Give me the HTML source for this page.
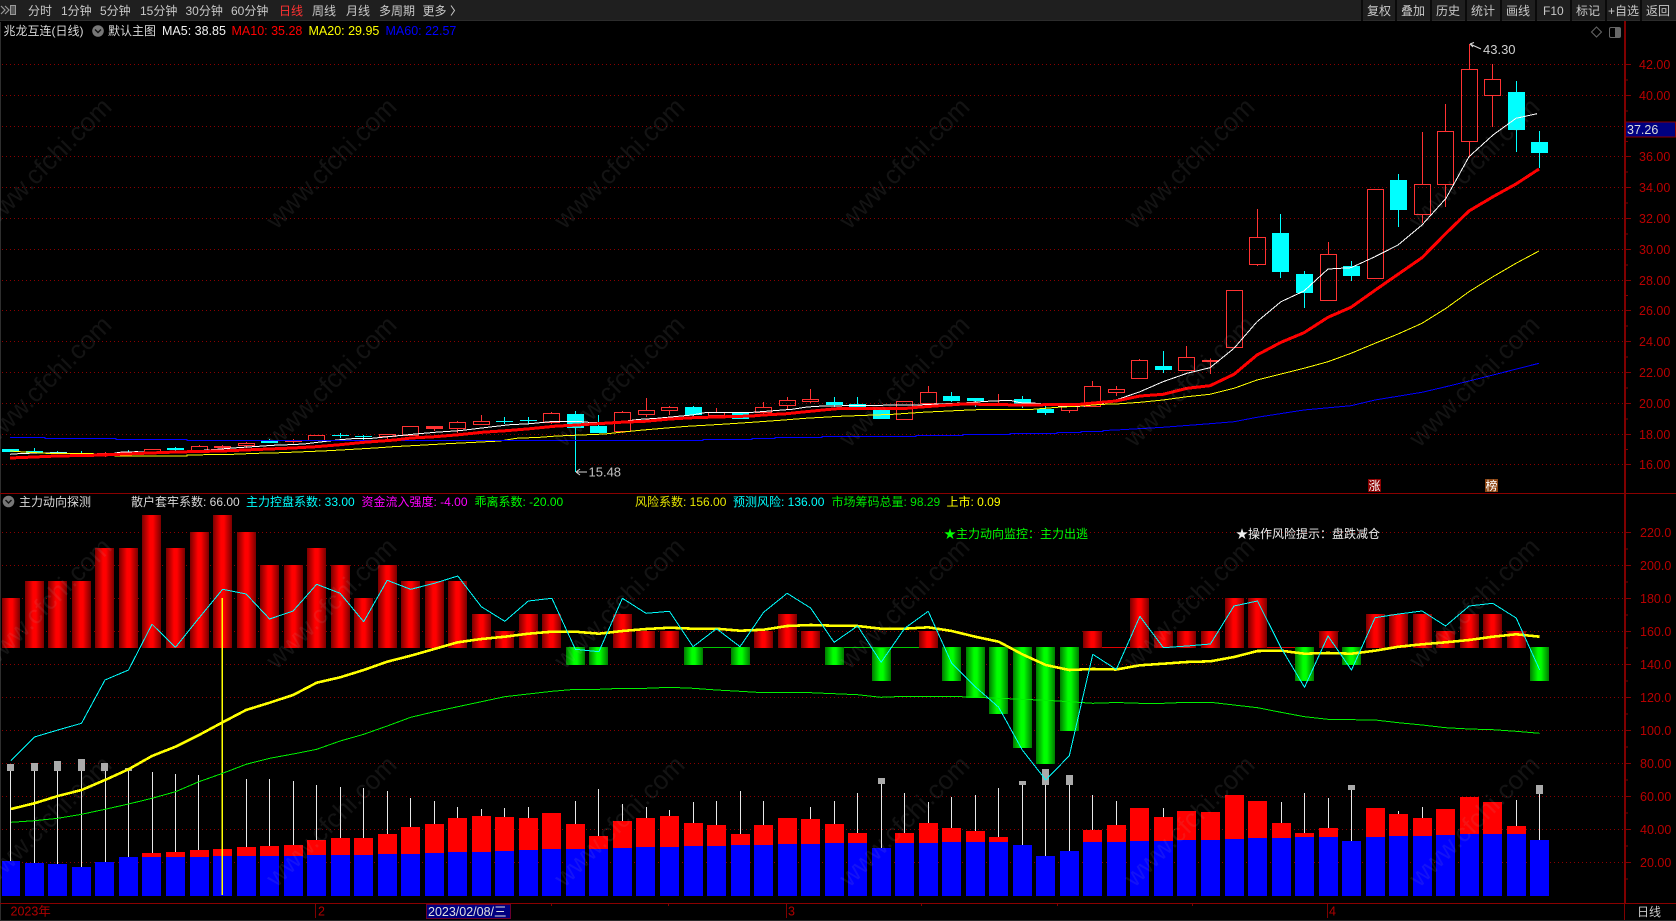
<!DOCTYPE html>
<html><head><meta charset="utf-8"><title>兆龙互连</title>
<style>
html,body{margin:0;padding:0;background:#000;width:1676px;height:921px;overflow:hidden}
svg{display:block;font-family:"Liberation Sans","Noto Sans CJK SC",sans-serif;font-size:12px}
.a{font-size:12.5px;fill:#b80000}
.t{fill:#c8c8c8}
.ma{font-size:12.5px}
</style></head><body>
<svg width="1676" height="921" viewBox="0 0 1676 921" xmlns="http://www.w3.org/2000/svg">
<defs>
<linearGradient id="r"><stop offset="0" stop-color="#7a0000"/><stop offset=".3" stop-color="#d80000"/><stop offset=".42" stop-color="#ff0000"/><stop offset=".58" stop-color="#ff0000"/><stop offset=".7" stop-color="#d80000"/><stop offset="1" stop-color="#7a0000"/></linearGradient>
<linearGradient id="g"><stop offset="0" stop-color="#007a00"/><stop offset=".3" stop-color="#00d800"/><stop offset=".42" stop-color="#00ff00"/><stop offset=".58" stop-color="#00ff00"/><stop offset=".7" stop-color="#00d800"/><stop offset="1" stop-color="#007a00"/></linearGradient>
</defs>
<rect width="1676" height="921" fill="#000"/>
<!-- toolbar -->
<rect width="1676" height="21" fill="#1f1f1f"/>
<rect y="20" width="1676" height="1" fill="#2c2c2c"/>
<rect x="0" y="22" width="1" height="899" fill="#2e2e2e"/>
<path d="M1 6l4 4-4 4M5 6l4 4-4 4" fill="none" stroke="#999" stroke-width="1.2"/>
<rect x="10.5" y="5.5" width="5" height="9" fill="#555" stroke="#999"/>
<g class="t">
<text x="28" y="15">分时</text><text x="61" y="15">1分钟</text><text x="100" y="15">5分钟</text><text x="140" y="15">15分钟</text><text x="185.5" y="15">30分钟</text><text x="231" y="15">60分钟</text>
<text x="279" y="15" style="fill:#ff3232">日线</text><text x="312" y="15">周线</text><text x="346" y="15">月线</text><text x="379" y="15">多周期</text><text x="422.5" y="15">更多</text>
</g>
<path d="M451 5.5l3.5 5-3.5 5" fill="none" stroke="#c8c8c8"/>
<g fill="#0a0a0a"><rect x="1361" width="2" height="21"/><rect x="1395" width="2" height="21"/><rect x="1430" width="2" height="21"/><rect x="1465" width="2" height="21"/><rect x="1500" width="2" height="21"/><rect x="1535" width="2" height="21"/><rect x="1570" width="2" height="21"/><rect x="1605" width="2" height="21"/><rect x="1640" width="2" height="21"/></g>
<g class="t"><text x="1367" y="15">复权</text><text x="1401" y="15">叠加</text><text x="1436" y="15">历史</text><text x="1471" y="15">统计</text><text x="1506" y="15">画线</text><text x="1543" y="15">F10</text><text x="1576" y="15">标记</text><text x="1608" y="15">+自选</text><text x="1646" y="15">返回</text></g>
<!-- grid -->
<g stroke="#8a0000" stroke-dasharray="1 3" fill="none"><path d="M2 64.5H1624M2 95.5H1624M2 126.5H1624M2 156.5H1624M2 187.5H1624M2 218.5H1624M2 249.5H1624M2 280.5H1624M2 310.5H1624M2 341.5H1624M2 372.5H1624M2 403.5H1624M2 434.5H1624M2 464.5H1624M2 532.5H1624M2 565.5H1624M2 598.5H1624M2 631.5H1624M2 664.5H1624M2 697.5H1624M2 730.5H1624M2 763.5H1624M2 796.5H1624M2 829.5H1624M2 862.5H1624"/></g>
<!-- candles -->
<g shape-rendering="crispEdges">
<path fill="none" stroke="#ff3232" d="M97.5 453.5h16v1h-16zM105.5 452V453.5M105.5 454.5V457M144.5 449.5h16v4h-16zM191.5 446.5h16v5h-16zM199.5 445V446.5M214.5 446.5h16v1h-16zM222.5 445V446.5M222.5 447.5V449M238.5 443.5h16v2h-16zM246.5 442V443.5M246.5 445.5V448M285.5 440.5h16v1h-16zM293.5 439V440.5M293.5 441.5V443.5M308.5 435.5h16v5h-16zM379.5 434.5h16v2h-16zM387.5 436.5V439M402.5 426.5h16v9h-16zM426.5 426.5h16v2h-16zM434.5 428.5V431M449.5 422.5h16v6h-16zM457.5 421V422.5M457.5 428.5V433M473.5 421.5h16v3h-16zM481.5 415V421.5M543.5 413.5h16v9h-16zM551.5 412V413.5M551.5 422.5V424M614.5 412.5h16v19h-16zM622.5 411V412.5M622.5 431.5V433M638.5 410.5h16v4h-16zM646.5 398V410.5M646.5 414.5V417M661.5 407.5h16v3h-16zM669.5 406V407.5M669.5 410.5V415M708.5 412.5h16v3h-16zM716.5 408V412.5M755.5 407.5h16v5h-16zM763.5 402V407.5M763.5 412.5V414M779.5 400.5h16v5h-16zM787.5 397V400.5M787.5 405.5V409M802.5 399.5h16v2h-16zM810.5 389V399.5M810.5 401.5V403M896.5 401.5h16v18h-16zM920.5 392.5h16v11h-16zM928.5 386V392.5M928.5 403.5V405M990.5 403.5h16v2h-16zM998.5 394V403.5M1061.5 406.5h16v4h-16zM1069.5 403V406.5M1069.5 410.5V413M1084.5 386.5h16v20h-16zM1092.5 381V386.5M1108.5 389.5h16v3h-16zM1116.5 386V389.5M1116.5 392.5V396M1131.5 360.5h16v18h-16zM1139.5 359V360.5M1178.5 357.5h16v13h-16zM1186.5 346V357.5M1202.5 360.5h16v1h-16zM1210.5 358.5V360.5M1210.5 361.5V374M1226.5 290.5h16v57h-16zM1249.5 237.5h16v27h-16zM1257.5 209V237.5M1257.5 264.5V266M1320.5 254.5h16v46h-16zM1328.5 242V254.5M1367.5 189.5h16v89h-16zM1414.5 184.5h16v30h-16zM1422.5 132V184.5M1422.5 214.5V223M1437.5 131.5h16v53h-16zM1445.5 104V131.5M1445.5 184.5V207M1461.5 69.5h16v72h-16zM1469.5 44V69.5M1469.5 141.5V157M1484.5 79.5h16v16h-16zM1492.5 64V79.5M1492.5 95.5V127"/>
<path fill="none" stroke="#00ffff" d="M34.5 448V453M57.5 451V454M81.5 451V455M128.5 450V455M175.5 447V451M269.5 439V442M340.5 433V438M363.5 435V440M504.5 417V424M528.5 417V424M575.5 411V472M598.5 415V433M693.5 406V416M740.5 412V419M834.5 397V407M857.5 397V408M951.5 392V402M975.5 398V407M1022.5 396V408M1045.5 406V415M1163.5 351V373M1280.5 214V278M1304.5 271V308M1351.5 261V281M1398.5 174V227M1516.5 81V152M1539.5 131V168"/>
<path fill="#00ffff" d="M2 449h17v3h-17zM26 451h17v2h-17zM50 452h17v2h-17zM73 453h17v1h-17zM120 452h17v1h-17zM167 448h17v2h-17zM261 441h17v2h-17zM332 435h17v1h-17zM355 436h17v1h-17zM496 421h17v1h-17zM520 420h17v1h-17zM567 414h17v14h-17zM590 426h17v7h-17zM685 407h17v8h-17zM732 412h17v7h-17zM826 402h17v3h-17zM849 404h17v4h-17zM873 407h17v12h-17zM943 396h17v5h-17zM967 398h17v3h-17zM1014 399h17v6h-17zM1037 409h17v4h-17zM1155 366h17v4h-17zM1272 233h17v39h-17zM1296 274h17v19h-17zM1343 266h17v10h-17zM1390 180h17v30h-17zM1508 92h17v38h-17zM1531 142h17v11h-17z"/>
<path fill="#ff3232" d="M426 426h17v3h-17zM1202 360h17v2h-17z"/>
</g>
<!-- MAs -->
<g fill="none" stroke-linejoin="round" shape-rendering="crispEdges">
<polyline stroke="#ffffff" stroke-width="1" points="10,454.3 24,453.3 60,453 95,454.3 107,455 119,452.3 136,451.7 176,452.7 198,450.7 221,449 237,447.7 253,446.7 273,445.3 289,444.7 304,444 326,441.3 340,439.7 352,438.7 372,438.3 395,436 419,433.7 435,432.3 459,430.7 476,428.7 490,427 510,424.7 530,423.7 554,421.3 577,421.3 593,422.7 620,421.7 640,419.3 657,418.3 692,415 707,412.3 753,412.3 770,411 792,409.3 807,407 823,406 877,405.3 917,405 940,404 963,403 987,401.3 1010,400.3 1020,402.7 1037,403.3 1057,405.7 1075,406.7 1093,405 1110,402.3 1116,400 1140,391.7 1163,381.7 1187,373.3 1210,367.7 1234,348.3 1257,321.7 1281,301.7 1304,291 1328,269 1351,267.7 1375,256.7 1398,245 1422,225 1446,198.3 1469,156.7 1493,135 1516,118.3 1537,113.7"/>
<polyline stroke="#ffff00" stroke-width="1" points="10,451 24,452 53,453.7 93,453.7 117,456 187,456 187,455 233,454.3 257,453.3 281,452.7 305,451.7 328,450.7 346,449.7 375,448 393,446.7 419,445.3 447,443.7 475,442.3 500,441 516,438.3 540,437.3 557,436 581,435 605,434 620,432.3 640,430.3 663,428.3 687,426.3 722,424.3 752,422.3 780,420.3 805,418.3 840,416.3 893,414.3 922,412.3 963,410.3 987,409.3 1033,409.3 1057,407.3 1075,406.3 1103,404.3 1116,404 1140,402.3 1163,400 1187,396.7 1210,394.3 1234,388.3 1257,380 1281,374 1304,368.3 1328,361.7 1351,353.3 1375,343.3 1398,334 1422,323.3 1446,308.3 1469,291.7 1493,276.7 1516,263.3 1539,251"/>
<polyline stroke="#0000ff" stroke-width="1" points="10,437.5 45,437.5 45,438.5 116,438.5 116,439.5 187,439.5 187,440.5 703,440.5 703,439.5 752,439.5 752,438.5 775,438.5 775,437.5 822,437.5 822,436.5 916,436.5 916,435.5 963,435.5 963,434.5 1010,434.5 1010,433.5 1057,433.5 1057,432.5 1081,432.5 1081,431.5 1103,431.5 1103,430.5 1116,430 1163,427.3 1210,423.7 1234,421.7 1257,417.3 1304,410 1351,405.7 1375,400 1422,392.3 1446,386.7 1469,381 1493,375 1539,363.3"/>
<polyline stroke="#ff0000" stroke-width="3" points="10,458 34,457 57,456 93,455.3 119,454.3 150,453 176,452 221,451 245,450 269,449 293,448 316,446.7 340,444.7 364,442.3 395,440 411,438 435,436.7 459,434.7 482,432.3 506,430.7 530,428.7 554,426.3 577,425 620,422.3 645,421.3 670,419 693,417.7 717,417 752,416 763,415 787,413.7 800,412.3 823,410 837,408.7 903,408.7 917,407.3 963,404 1023,405 1080,404.3 1097,402.7 1116,401 1140,396 1163,394.3 1187,388.3 1210,385.7 1234,374.3 1257,355 1281,342.3 1304,332.7 1328,317.3 1351,307.3 1375,290.3 1398,274.3 1422,257.7 1446,233.3 1469,211 1493,196.7 1516,184 1539,169"/>
</g>
<!-- annotations -->
<path d="M1470 44l11 5M1470 44l4-1.5M1470 44l3 3" fill="none" stroke="#d8d8d8"/>
<text x="1483" y="54" fill="#d0d0d0" style="font-size:13px">43.30</text>
<path d="M576 472H587M576 472l4-3M576 472l4 3" fill="none" stroke="#d8d8d8"/>
<text x="588.5" y="476.5" fill="#c0c0c0" style="font-size:13px">15.48</text>
<rect x="1368" y="479" width="13" height="13" fill="#8b0000"/><text x="1368.5" y="490" fill="#fff" style="font-size:12px">涨</text>
<rect x="1485" y="479" width="13" height="13" fill="#8b4513"/><text x="1485.5" y="490" fill="#fff" style="font-size:12px">榜</text>
<!-- info line -->
<text x="3.5" y="35" fill="#d8d8d8">兆龙互连(日线)</text>
<circle cx="98" cy="31" r="5.8" fill="#777"/><path d="M95 29.5l3 3 3-3" fill="none" stroke="#111" stroke-width="1.4"/>
<text x="108" y="35" fill="#d8d8d8">默认主图</text>
<text x="162" y="35" class="ma" fill="#f0f0f0">MA5: 38.85</text>
<text x="231.5" y="35" class="ma" fill="#ff0000">MA10: 35.28</text>
<text x="308.5" y="35" class="ma" fill="#ffff00">MA20: 29.95</text>
<text x="385.5" y="35" class="ma" fill="#0000ff">MA60: 22.57</text>
<path d="M1596.5 27l5 5-5 5-5-5z" fill="none" stroke="#666"/>
<rect x="1609.5" y="27.5" width="11" height="10" rx="1.5" fill="none" stroke="#666"/><rect x="1615" y="28" width="5" height="9" fill="#666"/>
<!-- frame -->
<rect x="0" y="493" width="1676" height="1" fill="#8a0000"/>
<rect x="0" y="903" width="1676" height="1" fill="#8a0000"/>
<rect x="1624" y="21" width="2" height="882" fill="#800000"/>
<rect x="1624" y="903" width="1" height="18" fill="#800000"/>
<path stroke="#800000" fill="none" d="M1626 64.5h5M1626 95.5h5M1626 126.5h5M1626 156.5h5M1626 187.5h5M1626 218.5h5M1626 249.5h5M1626 280.5h5M1626 310.5h5M1626 341.5h5M1626 372.5h5M1626 403.5h5M1626 434.5h5M1626 464.5h5M1626 80h2M1626 111h2M1626 141.5h2M1626 172h2M1626 203h2M1626 234h2M1626 265h2M1626 295.5h2M1626 326h2M1626 357h2M1626 388h2M1626 419h2M1626 449.5h2M1626 532.5h5M1626 565.5h5M1626 598.5h5M1626 631.5h5M1626 664.5h5M1626 697.5h5M1626 730.5h5M1626 763.5h5M1626 796.5h5M1626 829.5h5M1626 862.5h5M1626 549h2M1626 582h2M1626 615h2M1626 648h2M1626 681h2M1626 714h2M1626 747h2M1626 780h2M1626 813h2M1626 846h2M1626 879h2"/>
<g class="a">
<text x="1639" y="69">42.00</text><text x="1639" y="100">40.00</text><text x="1639" y="161">36.00</text><text x="1639" y="192">34.00</text><text x="1639" y="223">32.00</text><text x="1639" y="254">30.00</text><text x="1639" y="285">28.00</text><text x="1639" y="315">26.00</text><text x="1639" y="346">24.00</text><text x="1639" y="377">22.00</text><text x="1639" y="408">20.00</text><text x="1639" y="439">18.00</text><text x="1639" y="469">16.00</text>
<text x="1640" y="537">220.0</text><text x="1640" y="570">200.0</text><text x="1640" y="603">180.0</text><text x="1640" y="636">160.0</text><text x="1640" y="669">140.0</text><text x="1640" y="702">120.0</text><text x="1640" y="735">100.0</text><text x="1640" y="768">80.00</text><text x="1640" y="801">60.00</text><text x="1640" y="834">40.00</text><text x="1640" y="867">20.00</text>
</g>
<rect x="1625.5" y="122" width="50" height="15" fill="#000080" stroke="#8a0000"/>
<text x="1627" y="134" class="ma" fill="#dcdcdc">37.26</text>
<!-- sub header -->
<circle cx="8.5" cy="501.5" r="5.8" fill="#777"/><path d="M5.5 500l3 3 3-3" fill="none" stroke="#111" stroke-width="1.4"/>
<text x="19" y="506" fill="#d8d8d8">主力动向探测</text>
<text x="131" y="506" fill="#d8d8d8">散户套牢系数: 66.00</text>
<text x="246" y="506" fill="#00ffff">主力控盘系数: 33.00</text>
<text x="361.5" y="506" fill="#ff00ff">资金流入强度: -4.00</text>
<text x="474.5" y="506" fill="#00ff00">乖离系数: -20.00</text>
<text x="635" y="506" fill="#e6e600">风险系数: 156.00</text>
<text x="733" y="506" fill="#00ffff">预测风险: 136.00</text>
<text x="831.5" y="506" fill="#00e600">市场筹码总量: 98.29</text>
<text x="946.5" y="506" fill="#ffff00">上市: 0.09</text>
<text x="944" y="538" fill="#00ff00">★主力动向监控：主力出逃</text>
<text x="1236" y="538" fill="#f0f0f0">★操作风险提示：盘跌减仓</text>
<!-- osc bars -->
<g fill="url(#r)" shape-rendering="crispEdges">
<rect x="2" y="598" width="18" height="50"/><rect x="25" y="581" width="19" height="67"/><rect x="48" y="581" width="19" height="67"/><rect x="72" y="581" width="19" height="67"/><rect x="95" y="548" width="19" height="100"/><rect x="119" y="548" width="19" height="100"/><rect x="142" y="515" width="19" height="133"/><rect x="166" y="548" width="19" height="100"/><rect x="190" y="532" width="19" height="116"/><rect x="213" y="515" width="19" height="133"/><rect x="237" y="532" width="19" height="116"/><rect x="260" y="565" width="19" height="83"/><rect x="284" y="565" width="19" height="83"/><rect x="307" y="548" width="19" height="100"/><rect x="331" y="565" width="19" height="83"/><rect x="354" y="598" width="19" height="50"/><rect x="378" y="565" width="19" height="83"/><rect x="401" y="581" width="19" height="67"/><rect x="425" y="581" width="19" height="67"/><rect x="448" y="581" width="19" height="67"/><rect x="472" y="614" width="19" height="34"/><rect x="495" y="631" width="19" height="17"/><rect x="519" y="614" width="19" height="34"/><rect x="542" y="614" width="19" height="34"/><rect x="613" y="614" width="19" height="34"/><rect x="636" y="631" width="19" height="17"/><rect x="660" y="631" width="19" height="17"/><rect x="754" y="631" width="19" height="17"/><rect x="778" y="614" width="19" height="34"/><rect x="801" y="631" width="19" height="17"/><rect x="919" y="631" width="19" height="17"/><rect x="1083" y="631" width="19" height="17"/><rect x="1130" y="598" width="19" height="50"/><rect x="1154" y="631" width="19" height="17"/><rect x="1177" y="631" width="19" height="17"/><rect x="1201" y="631" width="19" height="17"/><rect x="1225" y="598" width="19" height="50"/><rect x="1248" y="598" width="19" height="50"/><rect x="1319" y="631" width="19" height="17"/><rect x="1366" y="614" width="19" height="34"/><rect x="1389" y="614" width="19" height="34"/><rect x="1413" y="614" width="19" height="34"/><rect x="1436" y="631" width="19" height="17"/><rect x="1460" y="614" width="19" height="34"/><rect x="1483" y="614" width="19" height="34"/><rect x="1507" y="631" width="19" height="17"/>
</g>
<g fill="url(#g)" shape-rendering="crispEdges">
<rect x="566" y="647" width="19" height="18"/><rect x="589" y="647" width="19" height="18"/><rect x="684" y="647" width="19" height="18"/><rect x="731" y="647" width="19" height="18"/><rect x="825" y="647" width="19" height="18"/><rect x="872" y="647" width="19" height="34"/><rect x="942" y="647" width="19" height="34"/><rect x="966" y="647" width="19" height="51"/><rect x="989" y="647" width="19" height="67"/><rect x="1013" y="647" width="19" height="101"/><rect x="1036" y="647" width="19" height="117"/><rect x="1060" y="647" width="19" height="84"/><rect x="1295" y="647" width="19" height="34"/><rect x="1342" y="647" width="19" height="18"/><rect x="1530" y="647" width="19" height="34"/>
</g>
<path d="M703 647.5H731M844 647.5H919" stroke="#00c800" fill="none"/>
<path d="M1102 647.5H1130M1267 647.5H1295" stroke="#e00000" fill="none"/>
<!-- volume bars -->
<path fill="#ff0000" shape-rendering="crispEdges" d="M142 853h19v5h-19zM166 852h19v6h-19zM190 850h19v8h-19zM213 849h19v8h-19zM237 847h19v10h-19zM260 846h19v11h-19zM284 845h19v12h-19zM307 840h19v16h-19zM331 838h19v18h-19zM354 838h19v18h-19zM378 834h19v21h-19zM401 827h19v28h-19zM425 824h19v30h-19zM448 818h19v35h-19zM472 816h19v37h-19zM495 817h19v35h-19zM519 818h19v33h-19zM542 813h19v37h-19zM566 824h19v26h-19zM589 836h19v14h-19zM613 821h19v28h-19zM636 818h19v30h-19zM660 816h19v32h-19zM684 823h19v24h-19zM707 825h19v22h-19zM731 834h19v12h-19zM754 825h19v21h-19zM778 818h19v27h-19zM801 819h19v26h-19zM825 824h19v20h-19zM848 833h19v11h-19zM895 833h19v11h-19zM919 823h19v21h-19zM942 828h19v15h-19zM966 831h19v12h-19zM989 837h19v6h-19zM1083 830h19v13h-19zM1107 825h19v18h-19zM1130 808h19v34h-19zM1154 817h19v25h-19zM1177 811h19v30h-19zM1201 812h19v29h-19zM1225 795h19v45h-19zM1248 801h19v38h-19zM1272 823h19v16h-19zM1295 833h19v5h-19zM1319 828h19v10h-19zM1366 808h19v30h-19zM1389 814h19v23h-19zM1413 818h19v19h-19zM1436 809h19v27h-19zM1460 797h19v38h-19zM1483 802h19v33h-19zM1507 826h19v9h-19z"/>
<path fill="#0000ff" shape-rendering="crispEdges" d="M2 861h18V896h-18zM25 863h19V896h-19zM48 864h19V896h-19zM72 867h19V896h-19zM95 862h19V896h-19zM119 857h19V896h-19zM142 857h19V896h-19zM166 857h19V896h-19zM190 857h19V896h-19zM213 856h19V896h-19zM237 856h19V896h-19zM260 856h19V896h-19zM284 856h19V896h-19zM307 855h19V896h-19zM331 855h19V896h-19zM354 855h19V896h-19zM378 854h19V896h-19zM401 854h19V896h-19zM425 853h19V896h-19zM448 852h19V896h-19zM472 852h19V896h-19zM495 851h19V896h-19zM519 850h19V896h-19zM542 849h19V896h-19zM566 849h19V896h-19zM589 849h19V896h-19zM613 848h19V896h-19zM636 847h19V896h-19zM660 847h19V896h-19zM684 846h19V896h-19zM707 846h19V896h-19zM731 845h19V896h-19zM754 845h19V896h-19zM778 844h19V896h-19zM801 844h19V896h-19zM825 843h19V896h-19zM848 843h19V896h-19zM872 848h19V896h-19zM895 843h19V896h-19zM919 843h19V896h-19zM942 842h19V896h-19zM966 842h19V896h-19zM989 842h19V896h-19zM1013 845h19V896h-19zM1036 856h19V896h-19zM1060 851h19V896h-19zM1083 842h19V896h-19zM1107 842h19V896h-19zM1130 841h19V896h-19zM1154 841h19V896h-19zM1177 840h19V896h-19zM1201 840h19V896h-19zM1225 839h19V896h-19zM1248 838h19V896h-19zM1272 838h19V896h-19zM1295 837h19V896h-19zM1319 837h19V896h-19zM1342 841h19V896h-19zM1366 837h19V896h-19zM1389 836h19V896h-19zM1413 836h19V896h-19zM1436 835h19V896h-19zM1460 834h19V896h-19zM1483 834h19V896h-19zM1507 834h19V896h-19zM1530 840h19V896h-19z"/>
<path fill="none" stroke="#e8e8e8" shape-rendering="crispEdges" d="M10.5 770V861M34.5 770V863M57.5 770V864M81.5 770V867M105.5 770V862M128.5 770V857M152.5 772V853M175.5 774V852M198.5 775V850M246.5 779V847M269.5 779V846M293.5 781V845M316.5 785V840M340.5 787V838M363.5 788V838M387.5 791V834M410.5 798V827M434.5 801V824M457.5 807V818M481.5 809V816M504.5 808V817M528.5 807V818M575.5 801V824M598.5 789V836M622.5 804V821M646.5 807V818M669.5 810V816M693.5 802V823M716.5 801V825M740.5 791V834M763.5 801V825M810.5 807V819M834.5 801V824M857.5 793V833M881.5 784V848M904.5 793V833M928.5 802V823M951.5 797V828M975.5 795V831M998.5 788V837M1022.5 785V845M1045.5 785V856M1069.5 785V851M1092.5 795V830M1116.5 801V825M1163.5 808V817M1281.5 802V823M1304.5 793V833M1328.5 798V828M1351.5 790V841M1398.5 811V814M1422.5 807V818M1516.5 800V826M1539.5 794V840"/>
<path fill="#aaaaaa" shape-rendering="crispEdges" d="M7 764h7v7h-7zM31 763h7v8h-7zM54 761h7v10h-7zM78 759h7v12h-7zM101 763h7v8h-7zM125 768h7v3h-7zM878 778h7v6h-7zM1019 781h7v4h-7zM1042 769h7v16h-7zM1066 775h7v10h-7zM1348 785h7v5h-7zM1536 785h7v9h-7z"/>
<!-- osc lines -->
<rect x="221.5" y="598" width="1.5" height="297" fill="#ffff00"/>
<g fill="none" stroke-linejoin="round" shape-rendering="crispEdges">
<polyline stroke="#00f000" stroke-width="1" points="10.9,822.3 34.4,820.7 57.9,818.3 81.5,814.3 105,809.3 128.5,804 152,798.3 175.5,791.7 199,781.7 222.6,773.3 246.1,764.3 269.6,758.3 293.1,754 316.7,749.3 340.2,741 363.7,734.3 387.2,726 410.7,717.3 434.3,711.7 457.8,706.7 481.3,701.7 504.8,696.7 528.3,694 551.9,691.3 575.4,689.3 598.9,689.3 622.4,688.3 646,688.3 669.5,687.3 693,688.3 716.5,690 740,691.3 763.6,692.7 787.1,692.7 810.6,692.7 834.1,693.7 857.6,694.7 881.1,697.3 904.7,696.3 928.2,696.3 951.7,696.3 975.2,697.3 998.7,698.3 1022.3,699.3 1045.8,700.3 1069.3,701.7 1092.8,703.3 1116.3,702.5 1139.9,703.3 1163.4,703.3 1186.9,702.3 1210.4,702.3 1234,705 1257.5,707.7 1281,712.3 1304.5,716.7 1328,719.3 1351.5,719.7 1375.1,720 1398.6,722.7 1422.1,725 1445.6,727.7 1469.2,729 1492.7,729.7 1516.2,731.3 1539.7,733.3"/>
<polyline stroke="#ffff00" stroke-width="2.6" points="10.9,809 34.4,803.3 57.9,796 81.5,790 105,780 128.5,769.3 152,756 175.5,746.7 199,735 222.6,722.3 246.1,710 269.6,702.7 293.1,695 316.7,682.7 340.2,677.3 363.7,670 387.2,661.7 410.7,655.7 434.3,649 457.8,642.3 481.3,639 504.8,636.7 528.3,633.7 551.9,631.7 575.4,631.7 598.9,633.7 622.4,631 646,629 669.5,627.7 693,628.7 716.5,628.7 740,630.7 763.6,629.7 787.1,626 810.6,625 834.1,625.7 857.6,626 881.1,628.7 904.7,628.7 928.2,627.3 951.7,631 975.2,636.7 998.7,641.7 1022.3,654.3 1045.8,665 1069.3,670 1092.8,669 1116.3,669.5 1139.9,665.3 1163.4,663.7 1186.9,662 1210.4,661.3 1234,657 1257.5,651 1281,650.7 1304.5,653.7 1328,653 1351.5,653.7 1375.1,650.7 1398.6,646.7 1422.1,644.3 1445.6,642.3 1469.2,640 1492.7,636.7 1516.2,634.3 1539.7,636.7"/>
<polyline stroke="#00ffff" stroke-width="1" points="10.9,760.7 34.4,737 57.9,730 81.5,723.3 105,680 128.5,670 152,624.3 175.5,647.3 199,618 222.6,589.3 246.1,594 269.6,619 293.1,611 316.7,584.3 340.2,593.3 363.7,621.7 387.2,580.3 410.7,589.3 434.3,583.3 457.8,576 481.3,606.7 504.8,621.3 528.3,601 551.9,598.3 575.4,649.3 598.9,651.7 622.4,598.3 646,613.3 669.5,611.3 693,646.7 716.5,628.7 740,646.7 763.6,612.3 787.1,593.3 810.6,608 834.1,642.3 857.6,626 881.1,662.3 904.7,628.3 928.2,611.3 951.7,663.3 975.2,686.7 998.7,707.3 1022.3,750 1045.8,780 1069.3,755.7 1092.8,654.3 1116.3,669.5 1139.9,616.3 1163.4,647.7 1186.9,646 1210.4,644 1234,606 1257.5,601 1281,647.7 1304.5,687.3 1328,636 1351.5,670 1375.1,617.7 1398.6,614 1422.1,611 1445.6,626 1469.2,606 1492.7,603.3 1516.2,618 1539.7,670"/>
</g>
<!-- bottom axis -->
<text x="10.5" y="915.5" fill="#b00000" style="font-size:12.5px">2023年</text>
<rect x="315" y="904" width="1" height="14" fill="#800000"/><text x="318" y="915.5" fill="#b00000" style="font-size:12.5px">2</text>
<rect x="426.5" y="904.5" width="84" height="14" fill="#000080" stroke="#6a0030"/><text x="428" y="916" fill="#e0e0e0" style="font-size:12.5px">2023/02/08/三</text>
<rect x="786" y="904" width="1" height="14" fill="#800000"/><text x="788" y="915.5" fill="#b00000" style="font-size:12.5px">3</text>
<rect x="1327" y="904" width="1" height="14" fill="#800000"/><text x="1329" y="915.5" fill="#b00000" style="font-size:12.5px">4</text>
<path stroke="#800000" fill="none" d="M551.5 904v2M668.5 904v2M921.5 904v2M1057.5 904v2M1192.5 904v2"/>
<text x="1637" y="916" fill="#c8c8c8">日线</text>
<rect x="0" y="920" width="1676" height="1" fill="#2a2a2a"/>
<!-- watermark -->
<g fill="rgba(170,170,170,.11)" text-anchor="middle" dominant-baseline="central" style="font-size:26px">
<text transform="translate(46 163) rotate(-45)">www.cfchi.com</text><text transform="translate(331 163) rotate(-45)">www.cfchi.com</text><text transform="translate(619 163) rotate(-45)">www.cfchi.com</text><text transform="translate(904 163) rotate(-45)">www.cfchi.com</text><text transform="translate(1189 163) rotate(-45)">www.cfchi.com</text><text transform="translate(1474 163) rotate(-45)">www.cfchi.com</text>
<text transform="translate(46 381) rotate(-45)">www.cfchi.com</text><text transform="translate(331 381) rotate(-45)">www.cfchi.com</text><text transform="translate(619 381) rotate(-45)">www.cfchi.com</text><text transform="translate(904 381) rotate(-45)">www.cfchi.com</text><text transform="translate(1189 381) rotate(-45)">www.cfchi.com</text><text transform="translate(1474 381) rotate(-45)">www.cfchi.com</text>
<text transform="translate(46 603) rotate(-45)">www.cfchi.com</text><text transform="translate(331 603) rotate(-45)">www.cfchi.com</text><text transform="translate(619 603) rotate(-45)">www.cfchi.com</text><text transform="translate(904 603) rotate(-45)">www.cfchi.com</text><text transform="translate(1189 603) rotate(-45)">www.cfchi.com</text><text transform="translate(1474 603) rotate(-45)">www.cfchi.com</text>
<text transform="translate(46 821) rotate(-45)">www.cfchi.com</text><text transform="translate(331 821) rotate(-45)">www.cfchi.com</text><text transform="translate(619 821) rotate(-45)">www.cfchi.com</text><text transform="translate(904 821) rotate(-45)">www.cfchi.com</text><text transform="translate(1189 821) rotate(-45)">www.cfchi.com</text><text transform="translate(1474 821) rotate(-45)">www.cfchi.com</text>
</g>
</svg>
</body></html>
